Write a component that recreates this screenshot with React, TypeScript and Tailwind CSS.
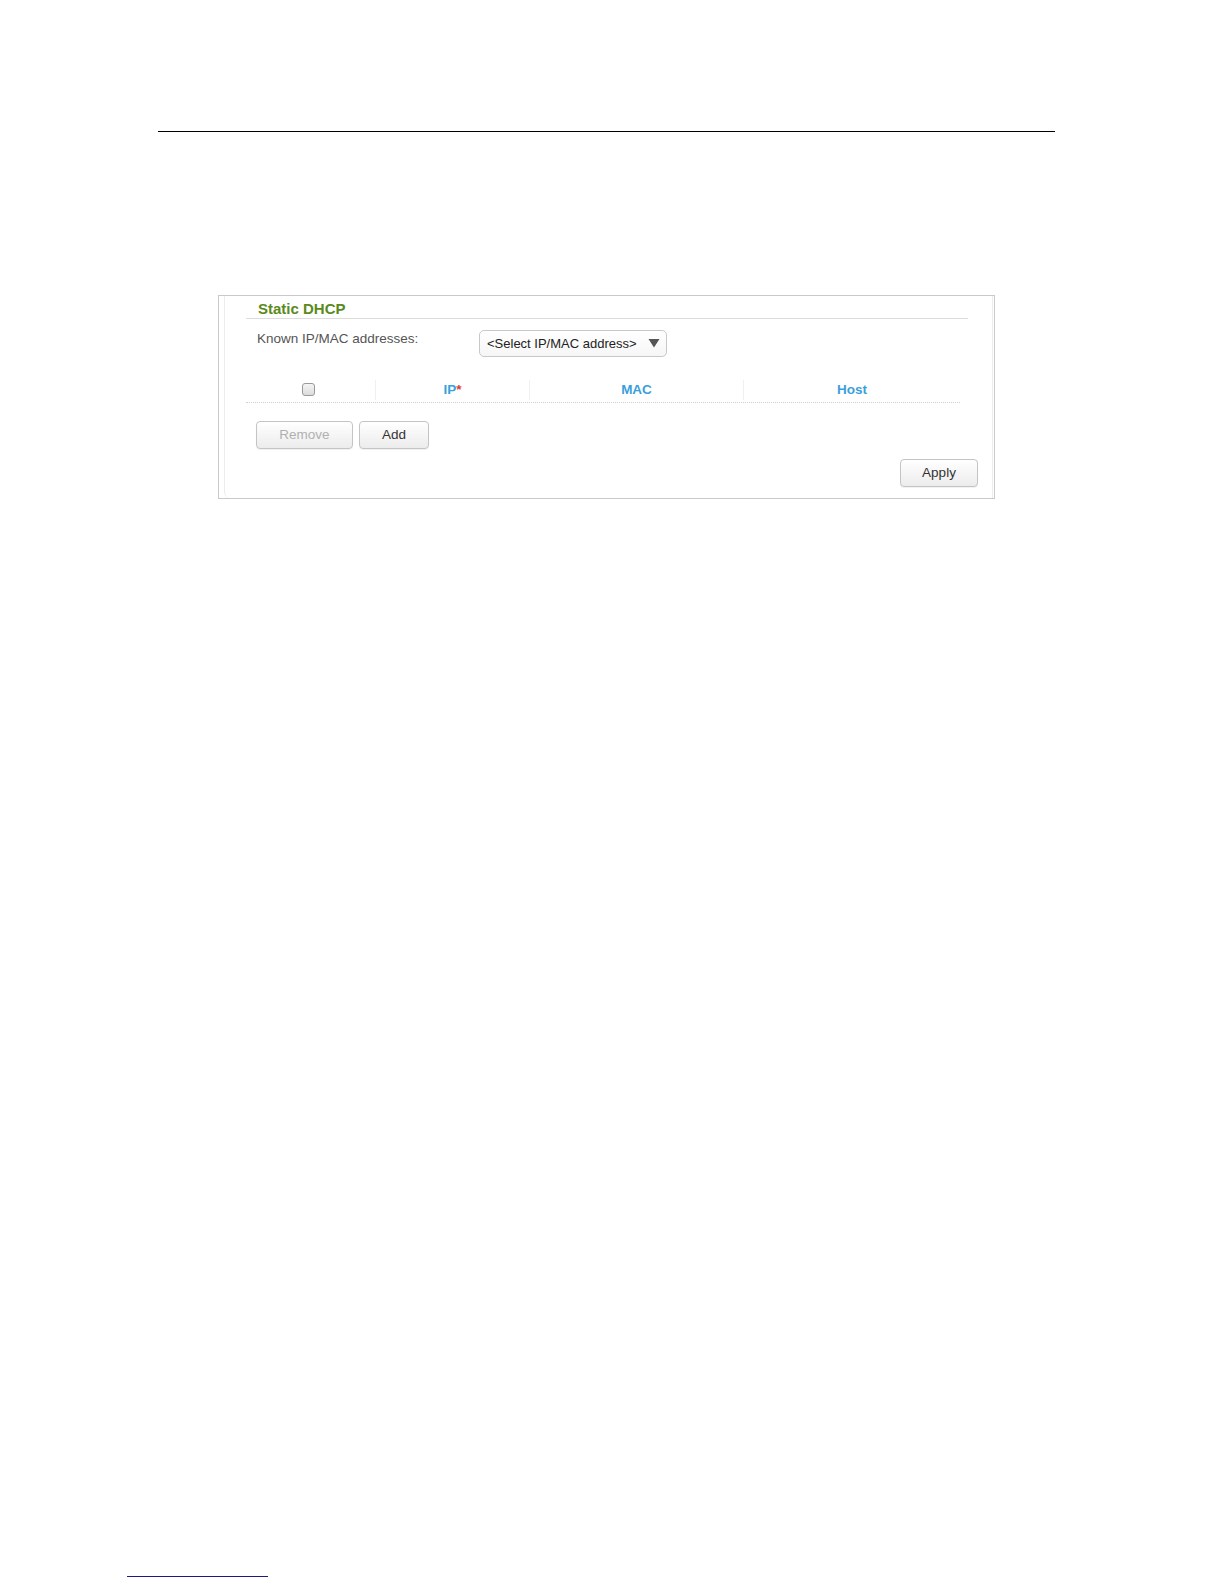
import React from "react";

const btn =
  "h-[28px] rounded-[4px] border border-[#c4c4c4] bg-gradient-to-b from-[#ffffff] to-[#ececec] text-[13.5px] shadow-[0_1px_1px_rgba(0,0,0,0.06)] flex items-center justify-center";

export default function App() {
  return (
    <div className="w-[1224px] h-[1584px] bg-white overflow-hidden" style={{ fontFamily: '"Liberation Sans", Arial, sans-serif' }}>
      <div className="pt-[131px]">
        <div className="ml-[158px] w-[897px] h-px bg-black" />
      </div>

      <div className="mt-[163px] ml-[218px] w-[777px] h-[204px] border border-[#c9c9c9] flex">
        <div className="ml-[5px] mr-[1px] flex-1 border-l border-r border-[#ececec] rounded-bl-[6px] pl-[21px] pr-[24px] flex flex-col">
          <div className="h-[23px] pt-[1px] pl-[12px] border-b border-[#dcdcdc] box-border">
            <span className="text-[15px] leading-[17px] font-bold text-[#5b8a1c]">Static DHCP</span>
          </div>

          <div className="mt-[11px] flex items-start">
            <div className="w-[233px] pl-[11px] pt-[1px] text-[13.5px] leading-[16px] text-[#555]">Known IP/MAC addresses:</div>
            <div className="h-[27px] w-[188px] rounded-[5px] border border-[#c8c8c8] bg-gradient-to-b from-white to-[#f6f6f6] flex items-center pl-[7px] pr-[6px] text-[13px] text-[#222]">
              <span className="flex-1 whitespace-nowrap">&lt;Select IP/MAC address&gt;</span>
              <svg width="12" height="10" viewBox="0 0 12 10" className="mb-[2px]">
                <path d="M0.5 1 L11.5 1 L6 9.5 Z" fill="#555" />
              </svg>
            </div>
          </div>

          <div className="mt-[21px] w-[714px] h-[25px] flex items-stretch border-b border-dotted border-[#cfcfcf] text-[13.5px] font-bold text-[#3a9fdc]">
            <div className="w-[129px] flex items-center justify-center pr-[4px] pb-[2px]">
              <div className="w-[13px] h-[13px] rounded-[3px] border border-[#9a9a9a] bg-gradient-to-b from-[#f4f4f4] to-[#dcdcdc]" />
            </div>
            <div className="w-[154px] flex items-center justify-center border-l border-[#f0f0f0] my-[2px]">
              <span>IP<span className="text-[#e03a3a]">*</span></span>
            </div>
            <div className="w-[214px] flex items-center justify-center border-l border-[#f0f0f0] my-[2px]">MAC</div>
            <div className="flex-1 flex items-center justify-center border-l border-[#f0f0f0] my-[2px]">Host</div>
          </div>

          <div className="mt-[18px] ml-[10px] flex gap-[6px]">
            <div className={`${btn} w-[97px] text-[#b0b0b0]`}>Remove</div>
            <div className={`${btn} w-[70px] text-[#333]`}>Add</div>
          </div>

          <div className="mt-[10px] flex justify-end -mr-[10px]">
            <div className={`${btn} w-[78px] text-[#333]`}>Apply</div>
          </div>
        </div>
      </div>

      <div className="mt-[1077px] ml-[127px] w-[141px] h-px bg-[#1a1a80]" />
    </div>
  );
}
